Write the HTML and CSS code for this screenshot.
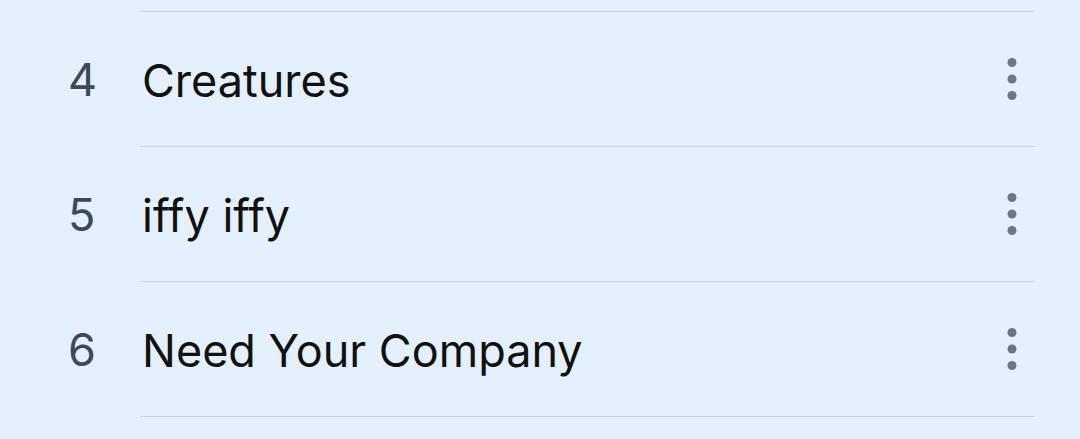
FILE: index.html
```html
<!DOCTYPE html>
<html lang="en">
<head>
  <meta charset="UTF-8" />
  <title>Tracks</title>
  <link rel="stylesheet" href="styles.css">
</head>
<body>
  <div class="list">
    <div class="row row-cut">
      <div class="num"></div>
      <div class="body"></div>
    </div>
    <div class="row">
      <div class="num">4</div>
      <div class="body">
        <span class="title">Creatures</span>
        <svg class="more" width="24" height="44" viewBox="0 0 24 44"><circle cx="12" cy="5.5" r="4.5"/><circle cx="12" cy="22" r="4.5"/><circle cx="12" cy="38.5" r="4.5"/></svg>
      </div>
    </div>
    <div class="row">
      <div class="num">5</div>
      <div class="body">
        <span class="title">iffy iffy</span>
        <svg class="more" width="24" height="44" viewBox="0 0 24 44"><circle cx="12" cy="5.5" r="4.5"/><circle cx="12" cy="22" r="4.5"/><circle cx="12" cy="38.5" r="4.5"/></svg>
      </div>
    </div>
    <div class="row">
      <div class="num">6</div>
      <div class="body">
        <span class="title">Need Your Company</span>
        <svg class="more" width="24" height="44" viewBox="0 0 24 44"><circle cx="12" cy="5.5" r="4.5"/><circle cx="12" cy="22" r="4.5"/><circle cx="12" cy="38.5" r="4.5"/></svg>
      </div>
    </div>
  </div>
</body>
</html>
```

FILE: styles.css
```css
body {
  margin: 0;
  font-family: Inter, "Noto Sans", sans-serif;
  background: #e4f0fc;
  color: #111;
}
.list {
  height: 439px;
  overflow: hidden;
}
.row {
  display: flex;
  padding-left: 68px;
}
.num {
  width: 72px;
  font-size: 45px;
  color: #3d4858;
  display: flex;
  align-items: center;
}
.body {
  flex: 1;
  margin-right: 45px;
  height: 134px;
  display: flex;
  align-items: center;
  border-bottom: 1px solid #c9d4df;
}
.row-cut .body {
  height: 11px;
}
.title {
  flex: 1;
  font-size: 45px;
  padding-left: 2px;
  padding-top: 2px;
}
.more {
  fill: #6d7684;
  margin-right: 11px;
}
```
